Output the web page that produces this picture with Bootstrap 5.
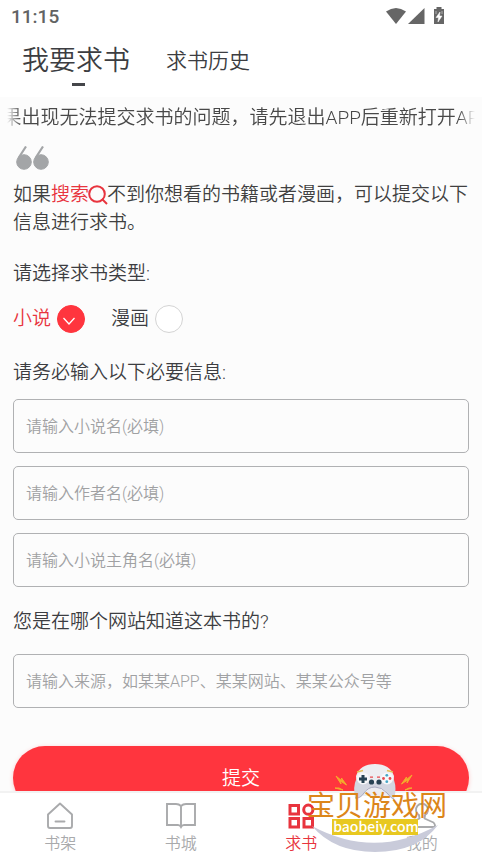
<!DOCTYPE html>
<html lang="zh-CN">
<head>
<meta charset="utf-8">
<meta name="viewport" content="width=device-width, initial-scale=1">
<title>我要求书</title>
<link href="https://cdn.jsdelivr.net/npm/bootstrap@5.3.0/dist/css/bootstrap.min.css" rel="stylesheet">
<style>
  body { font-family: Roboto, "Noto Sans CJK SC", sans-serif; font-weight: 350; font-size: 19px; line-height: 28px; color: #3c3d41; background: #fcfcfc; }
  .brand-red { color: #e8343e; }
  .status-bar { height: 32px; padding: 2px 36px 0 11px; font-weight: 500; color: #626363; }
  .top-tabs { height: 65px; padding: 0 22px; gap: 36px; }
  .top-tabs a { color: #3c3d41; text-decoration: none; font-size: 21px; line-height: 58px; }
  .top-tabs a.active { font-size: 27px; }
  .tab-mark { width: 13px; height: 3px; bottom: 11px; left: 50px; background: #45464a; }
  .content { padding: 0 13px; min-height: 0; }
  .notice { height: 40px; margin: 0 -6px; padding-top: 2px; color: #484848;
    -webkit-mask-image: linear-gradient(90deg, transparent, #000 14px, #000 calc(100% - 16px), transparent);
    mask-image: linear-gradient(90deg, transparent, #000 14px, #000 calc(100% - 16px), transparent); }
  .quote-icon { margin: 9px 0 11px 3px; }
  .intro { margin: 0 -4px 23px 0; color: #404040; }
  .intro svg { margin: 0 -1px 2px; vertical-align: middle; }
  .choice { gap: 26px; margin: 16px 0 26px; }
  .choice label { gap: 6px; padding-top: 1px; }
  .choice .form-check-input { width: 28px; height: 28px; margin: 0; border: 1px solid #d4d4d4; background-color: #fff; }
  .choice .form-check-input:checked { border-color: #ff353e; background-color: #ff353e; background-size: 28px 28px;
    background-image: url("data:image/svg+xml,%3Csvg xmlns='http://www.w3.org/2000/svg' viewBox='0 0 28 28' fill='none' stroke='%23fff' stroke-width='1.3'%3E%3Cpath d='M6.500 13l5.500 6 5.500-6'/%3E%3C/svg%3E"); }
  .fields { gap: 13px; margin: 12px 0 21px; }
  .field { height: 54px; padding: 0 12px; font-size: 16px; font-weight: 350; border: 1px solid #b0b1b3; border-radius: 5px; background: transparent; }
  .field::placeholder { color: #a0a1a3; }
  .source { margin-top: 18px; }
  .submit { height: 64px; margin-top: 38px; padding-top: 8px; font-size: 19px; font-weight: 350; color: #fff; background: #ff353e; border: 0; box-shadow: 0 1px 4px #ff353e44; }
  .bottom-nav { height: 66px; padding-top: 8px; border-top: 2px solid #f2f2f2; }
  .bottom-nav a { gap: 1px; font-size: 16px; line-height: 24px; color: #a9aaac; text-decoration: none; }
  .bottom-nav a.active { color: #e8343e; }
  .stamp { right: 34px; bottom: 3px; pointer-events: none; }
</style>
<script src="https://cdn.jsdelivr.net/npm/bootstrap@5.3.0/dist/js/bootstrap.bundle.min.js"></script>
</head>
<body class="d-flex flex-column vh-100 overflow-hidden position-relative">
<header class="bg-white flex-shrink-0">
  <div class="status-bar d-flex align-items-center justify-content-between">
    <span>11:15</span>
    <svg width="60" height="20" viewBox="0 0 60 20" fill="#666" aria-hidden="true">
      <path d="M0 4.500Q10-2.500 20 4.500L10 17z"/><path d="M22 17 38.500 1V17z"/>
      <path d="M48 2h2.500V0h5v2H58v15H48z"/><path d="M54 5l-4 5.500h2.500l-.5 4.500 4-6h-2.500zM50 4v3M56 4v3" fill="#fff" stroke="#fff" stroke-width=".5"/>
    </svg>
  </div>
  <nav class="top-tabs d-flex">
    <a href="#" class="active position-relative">我要求书<span class="tab-mark position-absolute"></span></a>
    <a href="#">求书历史</a>
  </nav>
</header>
<main class="content flex-grow-1 overflow-hidden">
  <div class="notice d-flex align-items-center justify-content-center overflow-hidden text-nowrap">果出现无法提交求书的问题，请先退出APP后重新打开AP</div>
  <svg class="quote-icon d-block" width="34" height="24" viewBox="0 0 34 24" aria-hidden="true">
    <g fill="#a3a5a7" stroke="#a3a5a7"><circle cx="8" cy="16" r="7.300"/><circle cx="25" cy="16" r="7.300"/><path d="M2.500 12 10 .5M19.500 12 27 .5" fill="none" stroke-width="2.200"/></g>
  </svg>
  <p class="intro">如果<a href="#" class="brand-red text-decoration-none">搜索<svg width="20" height="20" viewBox="0 0 20 20" fill="none" stroke="currentColor" stroke-width="2" aria-hidden="true"><circle cx="9" cy="9" r="7.800"/><path d="m14 14 5 5"/></svg></a>不到你想看的书籍或者漫画，可以提交以下信息进行求书。</p>
  <form>
    <div id="kind">请选择求书类型:</div>
    <div class="choice d-flex" role="radiogroup" aria-labelledby="kind">
      <label class="d-flex align-items-center brand-red">小说<input class="form-check-input" type="radio" name="kind" checked></label>
      <label class="d-flex align-items-center">漫画<input class="form-check-input" type="radio" name="kind"></label>
    </div>
    <div>请务必输入以下必要信息:</div>
    <div class="fields d-flex flex-column">
      <input class="form-control field" type="text" placeholder="请输入小说名(必填)" aria-label="小说名">
      <input class="form-control field" type="text" placeholder="请输入作者名(必填)" aria-label="作者名">
      <input class="form-control field" type="text" placeholder="请输入小说主角名(必填)" aria-label="小说主角名">
    </div>
    <label class="d-block" for="source">您是在哪个网站知道这本书的?</label>
    <input id="source" class="form-control field source" type="text" placeholder="请输入来源，如某某APP、某某网站、某某公众号等">
    <button type="button" class="btn submit w-100 rounded-pill">提交</button>
  </form>
</main>
<nav class="bottom-nav bg-white d-flex flex-shrink-0">
  <a href="#" class="d-flex flex-column align-items-center flex-fill w-25">
    <svg width="30" height="30" viewBox="0 0 30 30" fill="none" stroke="currentColor" stroke-width="1.900" stroke-linejoin="round" stroke-linecap="round"><path d="M15 2.500 27 13.500V25q0 2-2 2H5q-2 0-2-2V13.500zM10.500 20.500h9"/></svg>书架</a>
  <a href="#" class="d-flex flex-column align-items-center flex-fill w-25">
    <svg width="30" height="30" viewBox="0 0 30 30" fill="none" stroke="currentColor" stroke-width="1.900"><path d="M15 5Q13 3 10 3H1v21h11q2 0 3 2 1-2 3-2h11V3h-9q-3 0-5 2v21"/></svg>书城</a>
  <a href="#" class="active d-flex flex-column align-items-center flex-fill w-25">
    <svg width="30" height="30" viewBox="0 0 30 30" fill="none" stroke="currentColor" stroke-width="3"><path d="M4 4.500h8.500v8.500H4zM4 17.500h8.500V26H4zM18 17.500h8.500V26H18z"/><circle cx="22.300" cy="8.700" r="4.600"/></svg>求书</a>
  <a href="#" class="d-flex flex-column align-items-center flex-fill w-25">
    <svg width="30" height="30" viewBox="0 0 30 30" fill="none" stroke="currentColor" stroke-width="1.900" stroke-linejoin="round"><path d="M12 14a6 6 0 1 1 6 0l-.500 3.500 9 4q3 3.500 0 4.500H4q-3-1 0-4.500l8.500-4z"/></svg>我的</a>
</nav>
<svg class="stamp position-absolute" width="142" height="90" viewBox="0 0 142 90" role="img" aria-label="宝贝游戏网">
  <path d="M6 62Q69 96 132 61 112 88 69 88 28 88 6 62z" fill="#c9cbda"/>
  <path d="M50 12Q54 0 69 0T88 12L87 32H51z" fill="#ededf1"/>
  <path d="M50 16Q69 22 88 16 91 25 88 35 84 34 81 29 78 23 69 23T58 29Q54 35 49 34 47 22 50 16z" fill="#d3d5e0"/>
  <path d="M49 34Q54 35 58 29T69 23 81 29 88 35" fill="none" stroke="#a7a9bf"/>
  <circle cx="57" cy="14.500" r="6" fill="#f7f7f9"/><circle cx="81" cy="14.500" r="6" fill="#f7f7f9"/>
  <path d="M57 11v8M53 15h8" stroke="#284253" stroke-width="3"/>
  <g fill="#284253"><circle cx="65.500" cy="18" r="2.600"/><circle cx="73" cy="18" r="2.600"/></g>
  <g fill="#e84b4f"><circle cx="77.500" cy="14.500" r="1.400"/><circle cx="84" cy="14.500" r="1.400"/><path d="M64 12.500h3v1.200h-3zM71 12.500h3v1.200h-3z"/></g>
  <g fill="#47a7c8"><circle cx="80.800" cy="11.300" r="1.400"/><circle cx="80.800" cy="17.700" r="1.400"/></g>
  <path d="M51 8 57 6.500M81 6.500l6 1.500" stroke="#e4bd55" stroke-width="1.500"/>
  <path d="m30 12 6 5-.5-3 5 7-6-4 .5 3zM29 24l8 2-4-2zM106 11l-6 5 .5-3-5 7 6-4-.5 3zM106 24l-7 2 4-2z" fill="#f3ad2c" stroke="#f3ad2c"/>
  <path d="M26 55h86v16H26z" fill="#e8c820"/>
  <text x="1" y="52" font-family="Noto Sans CJK SC, sans-serif" font-size="28" font-weight="400" fill="#dc861a">宝贝游戏网</text>
  <text x="70" y="68" text-anchor="middle" font-family="Noto Sans CJK SC, sans-serif" font-size="14" font-weight="500" fill="#fff">baobeiy.com</text>
</svg>
</body>
</html>
